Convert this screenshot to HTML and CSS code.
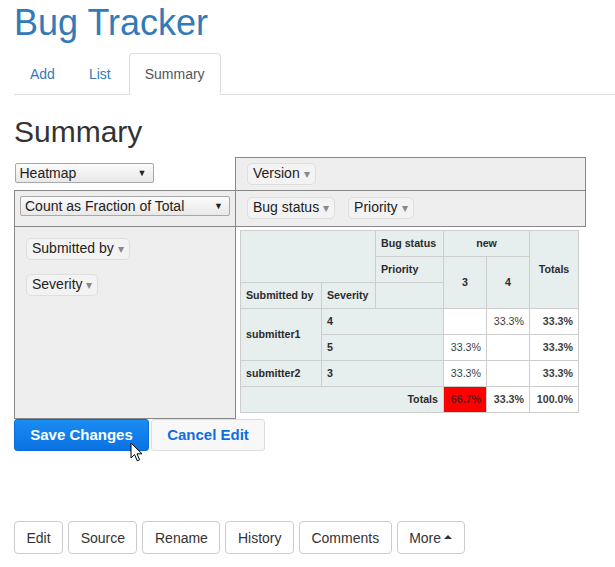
FILE: index.html
```html
<!DOCTYPE html>
<html>
<head>
<meta charset="utf-8">
<link rel="stylesheet" href="styles.css">
</head>
<body>
<div class="page">
  <h1 class="title">Bug Tracker</h1>
  <ul class="tabs">
    <li><a>Add</a></li>
    <li><a>List</a></li>
    <li class="active"><a>Summary</a></li>
  </ul>
  <h2 class="heading">Summary</h2>

  <table class="pvt-ui">
    <colgroup><col class="c-left"><col class="c-right"></colgroup>
    <tr class="r1">
      <td class="renderers"><div class="sel sel-heat"><span>Heatmap</span><span class="sel-arr">▼</span></div></td>
      <td class="axis"><span class="pill">Version <span class="tri">▾</span></span></td>
    </tr>
    <tr class="r2">
      <td class="axis"><div class="sel sel-agg"><span>Count as Fraction of Total</span><span class="sel-arr">▼</span></div></td>
      <td class="axis cols"><span class="pill">Bug status <span class="tri">▾</span></span><span class="pill">Priority <span class="tri">▾</span></span></td>
    </tr>
    <tr class="r3">
      <td class="axis rows">
        <div class="pill-row"><span class="pill">Submitted by <span class="tri">▾</span></span></div>
        <div class="pill-row"><span class="pill">Severity <span class="tri">▾</span></span></div>
      </td>
      <td class="output">
        <table class="pvt">
          <colgroup><col class="d1"><col class="d2"><col class="d3"><col class="d4"><col class="d5"><col class="d6"></colgroup>
          <tr>
            <th colspan="2" rowspan="2"></th>
            <th class="lbl">Bug status</th>
            <th colspan="2" class="ctr">new</th>
            <th rowspan="3" class="ctr">Totals</th>
          </tr>
          <tr>
            <th class="lbl">Priority</th>
            <th rowspan="2" class="ctr">3</th>
            <th rowspan="2" class="ctr">4</th>
          </tr>
          <tr>
            <th>Submitted by</th>
            <th>Severity</th>
            <th></th>
          </tr>
          <tr>
            <th rowspan="2">submitter1</th>
            <th colspan="2">4</th>
            <td></td>
            <td>33.3%</td>
            <td class="tot">33.3%</td>
          </tr>
          <tr>
            <th colspan="2">5</th>
            <td>33.3%</td>
            <td></td>
            <td class="tot">33.3%</td>
          </tr>
          <tr>
            <th>submitter2</th>
            <th colspan="2">3</th>
            <td>33.3%</td>
            <td></td>
            <td class="tot">33.3%</td>
          </tr>
          <tr>
            <th colspan="3" class="right">Totals</th>
            <td class="tot hot">66.7%</td>
            <td class="tot">33.3%</td>
            <td class="tot">100.0%</td>
          </tr>
        </table>
      </td>
    </tr>
  </table>

  <div class="edit-actions">
    <button class="btn-save">Save Changes</button>
    <button class="btn-cancel">Cancel Edit</button>
    <svg class="cursor" width="14" height="21" viewBox="0 0 14 21"><path d="M1 1 L1 16 L4.6 12.6 L7.2 18.8 L9.6 17.8 L7 11.8 L12 11.8 Z" fill="#fff" stroke="#000" stroke-width="1" stroke-linejoin="round"/></svg>
  </div>

  <div class="page-actions">
    <button class="btn">Edit</button>
    <button class="btn">Source</button>
    <button class="btn">Rename</button>
    <button class="btn">History</button>
    <button class="btn">Comments</button>
    <button class="btn">More<span class="caret"></span></button>
  </div>
</div>
</body>
</html>
```

FILE: styles.css
```css
html, body {
  margin: 0;
  padding: 0;
  background: #fff;
}
body {
  font-family: "Liberation Sans", Arial, sans-serif;
  font-size: 14px;
  line-height: 1.42857;
  color: #333;
}
.page {
  padding-left: 14px;
}
.title {
  margin: 3px 0 10px;
  font-size: 36px;
  font-weight: normal;
  line-height: 1.1;
  color: #337ab7;
}
.tabs {
  list-style: none;
  margin: 0;
  padding: 0;
  display: flex;
  border-bottom: 1px solid #ddd;
}
.tabs li {
  margin: 0 2px -1px 0;
}
.tabs a {
  display: block;
  padding: 10px 15px;
  line-height: 20px;
  border: 1px solid transparent;
  border-radius: 4px 4px 0 0;
  color: #337ab7;
}
.tabs .active a {
  color: #555;
  background: #fff;
  border-color: #ddd;
  border-bottom-color: transparent;
}
.heading {
  margin: 20px 0 9px;
  font-size: 30px;
  font-weight: normal;
  line-height: 1.1;
  color: #333;
}

/* pivot ui */
.pvt-ui {
  border-collapse: collapse;
  table-layout: fixed;
  width: 571px;
}
.c-left { width: 221px; }
.c-right { width: 350px; }
.pvt-ui > tbody > tr > td {
  vertical-align: top;
  padding: 5px;
}
.pvt-ui .axis {
  border: 1px solid #878787;
  background: #eee;
}
.pvt-ui .renderers {
  padding: 6px 0 0 0;
}
.r1 { height: 31px; }
.r2 { height: 36px; }
.r3 { height: 192px; }
.pvt-ui .axis .pill {
  margin: 0 13px 0 6px;
}
.pvt-ui .axis .pill + .pill {
  margin-left: 0;
}
.pvt-ui .cols {
  padding-top: 6px;
}
.pvt-ui .rows {
  padding-top: 11px;
}
.pill-row {
  padding: 0 6px;
  margin-bottom: 14px;
}
.pvt-ui .pill-row .pill {
  margin: 0;
}
.pill {
  display: inline-block;
  vertical-align: top;
  background: #f3f3f3;
  border: 1px solid #dedede;
  border-radius: 5px;
  padding: 2px 5px;
  line-height: 15px;
  font-size: 14px;
  color: #222;
  white-space: nowrap;
}
.tri {
  color: #888;
  font-size: 12px;
}
.sel {
  box-sizing: border-box;
  display: flex;
  align-items: center;
  justify-content: space-between;
  height: 20px;
  border: 1px solid #a9a9a9;
  border-radius: 2px;
  background: linear-gradient(#fbfbfb, #e8e8e8);
  padding: 0 6px 0 4px;
  font-size: 14px;
  line-height: 18px;
  color: #222;
}
.sel-heat { width: 139px; }
.sel-agg { width: 210px; }
.sel-arr {
  font-size: 9px;
  color: #222;
}
.pvt-ui .output {
  padding: 3px 0 0 4px;
}

/* data table */
.pvt {
  border-collapse: collapse;
  font-size: 8pt;
  text-align: left;
}
.d1 { width: 81px; }
.d2 { width: 54px; }
.d3 { width: 68px; }
.d4 { width: 43px; }
.d5 { width: 43px; }
.d6 { width: 49px; }
.pvt th, .pvt td {
  border: 1px solid #cdcdcd;
  padding: 5px;
  height: 15px;
  line-height: 15px;
  vertical-align: middle;
}
.pvt th {
  background: #e6eeee;
  font-weight: bold;
  color: #2b2b2b;
}
.pvt td {
  background: #fff;
  color: #3d3d3d;
  text-align: right;
}
.pvt .ctr { text-align: center; }
.pvt .right { text-align: right; }
.pvt .tot { font-weight: bold; }
.pvt .hot { background: #ff0000; color: #6a1a1a; }

/* buttons */
.edit-actions {
  position: relative;
  display: flex;
  gap: 2px;
  margin-top: 0;
}
.btn-save, .btn-cancel {
  font-family: "Liberation Sans", Arial, sans-serif;
  font-size: 15px;
  font-weight: bold;
  height: 32px;
  border-radius: 3px;
  padding: 0;
  white-space: nowrap;
}
.btn-save {
  width: 135px;
  color: #fff;
  background: linear-gradient(#1a8cf2, #0a72e2);
  border: 1px solid #0a6bd4;
}
.btn-cancel {
  width: 114px;
  color: #0f6fdc;
  background: #f8f8f8;
  border: 1px solid #dcdcdc;
}
.cursor {
  position: absolute;
  left: 116px;
  top: 23px;
}
.page-actions {
  display: flex;
  gap: 5px;
  margin-top: 70px;
}
.btn {
  font-family: "Liberation Sans", Arial, sans-serif;
  font-size: 14px;
  line-height: 20px;
  color: #333;
  background: #fff;
  border: 1px solid #ccc;
  border-radius: 4px;
  padding: 6px 11.5px;
  height: 33px;
  white-space: nowrap;
}
.caret {
  display: inline-block;
  width: 0;
  height: 0;
  margin-left: 3px;
  vertical-align: middle;
  border-left: 4px solid transparent;
  border-right: 4px solid transparent;
  border-bottom: 4px solid #333;
  position: relative;
  top: -2px;
}
```
